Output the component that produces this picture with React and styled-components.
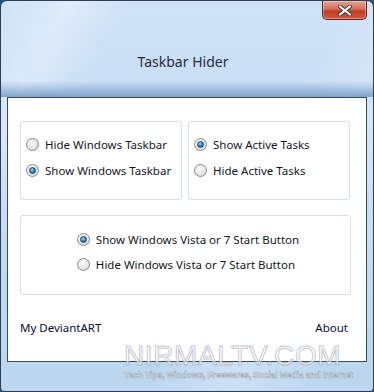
import React from "react";
import styled, { createGlobalStyle } from "styled-components";

const Global = createGlobalStyle`
  html, body { margin: 0; padding: 0; background: #1d5a8c; }
  body { width: 374px; height: 392px; overflow: hidden; }
`;

const Window = styled.div`
  position: relative;
  box-sizing: border-box;
  width: 374px;
  height: 392px;
  border: 1px solid #2e3d52;
  border-radius: 7px 7px 4px 4px;
  overflow: hidden;
  display: flex;
  flex-direction: column;
  font-family: "Noto Sans", "Open Sans", sans-serif;
  background:
    linear-gradient(118deg, rgba(255,255,255,0) 0%, rgba(255,255,255,0.35) 12%, rgba(255,255,255,0) 22%, rgba(255,255,255,0) 60%, rgba(255,255,255,0.25) 75%, rgba(255,255,255,0) 90%),
    linear-gradient(180deg, #cfe2f6 0%, #c4dcf3 40%, #bcd6f0 100%);
`;

const TitleBar = styled.div`
  position: relative;
  height: 96px;
  display: flex;
  flex-direction: column;
  &::after {
    content: "";
    position: absolute;
    left: 0; right: 0; bottom: 0;
    height: 16px;
    background: linear-gradient(180deg, rgba(110,150,195,0) 0%, rgba(100,142,190,0.75) 100%);
  }
`;

const Controls = styled.div`
  display: flex;
  justify-content: flex-end;
  padding-right: 6px;
`;

const CloseButton = styled.div`
  width: 45px;
  height: 19px;
  box-sizing: border-box;
  border: 1px solid #5a2a22;
  border-top: none;
  border-radius: 0 0 5px 5px;
  background: linear-gradient(180deg, #e8a193 0%, #d5705c 45%, #c13c22 55%, #d6533a 100%);
  box-shadow: inset 0 0 0 1px rgba(255,255,255,0.35);
  display: flex;
  align-items: center;
  justify-content: center;
`;

const Title = styled.div`
  margin-top: 32px;
  padding-right: 8px;
  text-align: center;
  font-size: 14px;
  color: #1e2c3a;
`;

const Client = styled.div`
  margin: 0 6px 0 6px;
  height: 265px;
  box-sizing: border-box;
  background: #ffffff;
  border: 1px solid #3a4a5c;
  padding: 23px 15px 0 12px;
  display: flex;
  flex-direction: column;
`;

const GroupRow = styled.div`
  display: flex;
  gap: 6px;
`;

const Group = styled.div`
  box-sizing: border-box;
  flex: 0 0 162px;
  height: 79px;
  border: 1px solid #d5dfe5;
  border-radius: 3px;
  display: flex;
  flex-direction: column;
  align-items: flex-start;
  padding: 15px 0 0 5px;
  gap: 12px;
`;

const WideGroup = styled.div`
  box-sizing: border-box;
  margin-top: 15px;
  height: 80px;
  flex: 0 0 80px;
  border: 1px solid #d5dfe5;
  border-radius: 3px;
  display: flex;
  justify-content: center;
  padding-top: 16px;
  padding-left: 5px;
`;

const OptionStack = styled.div`
  display: flex;
  flex-direction: column;
  align-items: flex-start;
  gap: 11px;
`;

const Option = styled.div`
  display: flex;
  align-items: center;
  gap: 6px;
  height: 14px;
  font-size: 11.5px;
  color: #16161e;
  white-space: nowrap;
`;

const RadioCircle = styled.span`
  position: relative;
  flex: 0 0 13px;
  width: 13px;
  height: 13px;
  box-sizing: border-box;
  border-radius: 50%;
  border: 1px solid #8b8b8b;
  background: radial-gradient(circle at 40% 35%, #fafafa 0%, #e6e6e6 55%, #c9c9c9 100%);
  &::after {
    content: "";
    display: ${(p) => (p.$checked ? "block" : "none")};
    position: absolute;
    left: 2px; top: 2px;
    width: 7px; height: 7px;
    box-sizing: border-box;
    border-radius: 50%;
    border: 1px solid #1b4a70;
    background: radial-gradient(circle at 40% 35%, #a8e2fb 0%, #2c8ac6 45%, #0e4b7c 100%);
  }
`;

const Footer = styled.div`
  margin-top: 25px;
  padding-right: 3px;
  display: flex;
  justify-content: space-between;
  font-size: 11.5px;
  color: #0a0c40;
`;

const Link = styled.span`
  cursor: pointer;
`;

const Watermark = styled.div`
  position: absolute;
  left: 123px;
  top: 340px;
  display: flex;
  flex-direction: column;
  align-items: flex-start;
  pointer-events: none;
  font-family: "Liberation Sans", Arial, sans-serif;
`;

const MarkBig = styled.div`
  font-size: 28px;
  line-height: 29px;
  letter-spacing: 0.6px;
  color: rgba(255, 255, 255, 0.6);
  -webkit-text-stroke: 1px rgba(150, 160, 172, 0.6);
`;

const MarkSmall = styled.div`
  font-size: 8.7px;
  font-weight: bold;
  letter-spacing: -0.2px;
  white-space: nowrap;
  color: rgba(255, 255, 255, 0.85);
  -webkit-text-stroke: 0.6px rgba(140, 150, 165, 0.8);
`;

const Radio = ({ checked, label }) => (
  <Option>
    <RadioCircle $checked={checked} />
    {label}
  </Option>
);

export default function App() {
  return (
    <>
      <Global />
      <Window>
        <TitleBar>
          <Controls>
            <CloseButton>
              <svg width="14" height="11" viewBox="0 0 14 11">
                <path d="M2 1.5 L12 9.5 M12 1.5 L2 9.5" stroke="#3b3b3b" strokeWidth="4" strokeLinecap="square" />
                <path d="M2 1.5 L12 9.5 M12 1.5 L2 9.5" stroke="#ffffff" strokeWidth="2" strokeLinecap="square" />
              </svg>
            </CloseButton>
          </Controls>
          <Title>Taskbar Hider</Title>
        </TitleBar>
        <Client>
          <GroupRow>
            <Group>
              <Radio label="Hide Windows Taskbar" />
              <Radio checked label="Show Windows Taskbar" />
            </Group>
            <Group>
              <Radio checked label="Show Active Tasks" />
              <Radio label="Hide Active Tasks" />
            </Group>
          </GroupRow>
          <WideGroup>
            <OptionStack>
              <Radio checked label="Show Windows Vista or 7 Start Button" />
              <Radio label="Hide Windows Vista or 7 Start Button" />
            </OptionStack>
          </WideGroup>
          <Footer>
            <Link>My DeviantART</Link>
            <Link>About</Link>
          </Footer>
        </Client>
        <Watermark>
          <MarkBig>NIRMALTV.COM</MarkBig>
          <MarkSmall>Tech Tips, Windows, Freewares, Social Media and Internet</MarkSmall>
        </Watermark>
      </Window>
    </>
  );
}
